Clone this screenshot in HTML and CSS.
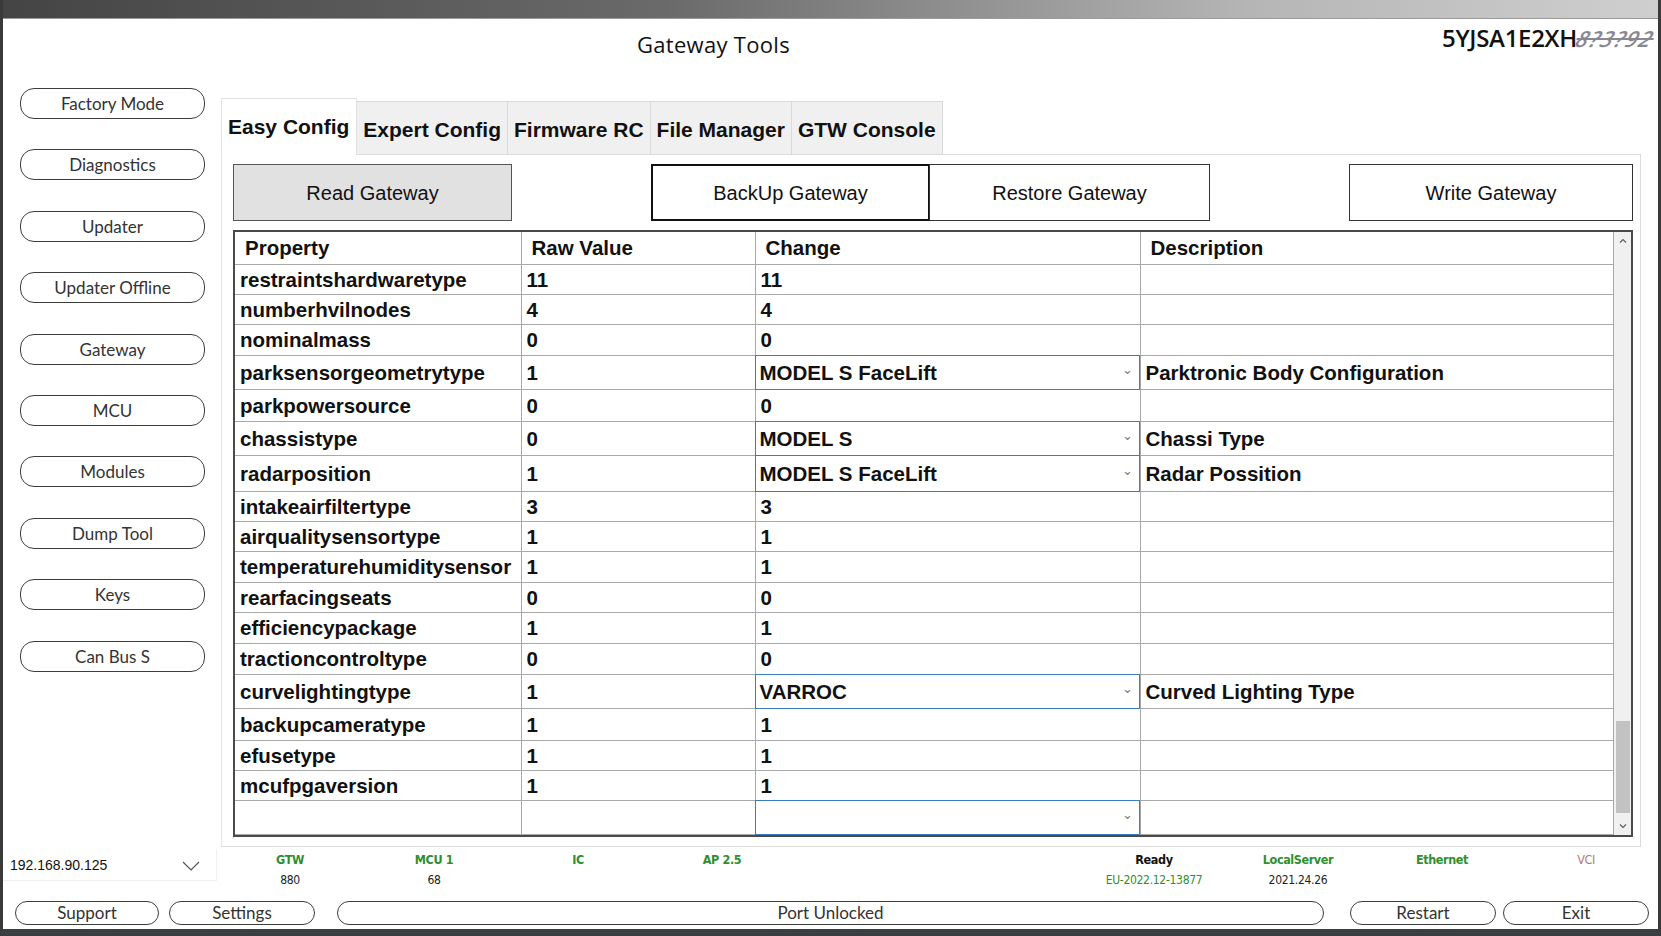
FILE: index.html
```
<!DOCTYPE html>
<html>
<head>
<title>Gateway Tools</title>
<meta charset="utf-8">
<link rel="stylesheet" href="styles.css">
</head>
<body>
<div class="window">
 <div class="titlebar"></div>

 <div class="head">
  <div class="title">Gateway Tools</div>
  <div class="vin">5YJSA1E2XH<span class="smudge">8?3?92</span></div>
 </div>

 <div class="main">
  <div class="sidebar">
   <div class="pill side">Factory Mode</div>
   <div class="pill side">Diagnostics</div>
   <div class="pill side">Updater</div>
   <div class="pill side">Updater Offline</div>
   <div class="pill side">Gateway</div>
   <div class="pill side">MCU</div>
   <div class="pill side">Modules</div>
   <div class="pill side">Dump Tool</div>
   <div class="pill side">Keys</div>
   <div class="pill side">Can Bus S</div>
  </div>

  <div class="tabs">
   <div class="tabstrip">
    <div class="tab active">Easy Config</div>
    <div class="tab">Expert Config</div>
    <div class="tab">Firmware RC</div>
    <div class="tab">File Manager</div>
    <div class="tab">GTW Console</div>
   </div>
   <div class="page">
    <div class="actions">
     <div class="btn read">Read Gateway</div>
     <div class="btn backup">BackUp Gateway</div>
     <div class="btn restore">Restore Gateway</div>
     <div class="btn write">Write Gateway</div>
    </div>

    <div class="grid">
     <table>
      <colgroup><col class="c1"><col class="c2"><col class="c3"><col class="c4"></colgroup>
      <tr class="hd"><th>Property</th><th>Raw Value</th><th>Change</th><th>Description</th></tr>
      <tr><td>restraintshardwaretype</td><td>11</td><td>11</td><td></td></tr>
      <tr><td>numberhvilnodes</td><td>4</td><td>4</td><td></td></tr>
      <tr class="wide"><td>nominalmass</td><td>0</td><td>0</td><td></td></tr>
      <tr class="tall"><td>parksensorgeometrytype</td><td>1</td><td class="combo"><div class="cb">MODEL S FaceLift<span class="chev">&#8964;</span></div></td><td>Parktronic Body Configuration</td></tr>
      <tr class="after"><td>parkpowersource</td><td>0</td><td>0</td><td></td></tr>
      <tr class="tall"><td>chassistype</td><td>0</td><td class="combo"><div class="cb">MODEL S<span class="chev">&#8964;</span></div></td><td>Chassi Type</td></tr>
      <tr class="tall taller"><td>radarposition</td><td>1</td><td class="combo"><div class="cb">MODEL S FaceLift<span class="chev">&#8964;</span></div></td><td>Radar Possition</td></tr>
      <tr><td>intakeairfiltertype</td><td>3</td><td>3</td><td></td></tr>
      <tr><td>airqualitysensortype</td><td>1</td><td>1</td><td></td></tr>
      <tr class="wide"><td>temperaturehumiditysensor</td><td>1</td><td>1</td><td></td></tr>
      <tr><td>rearfacingseats</td><td>0</td><td>0</td><td></td></tr>
      <tr class="wide"><td>efficiencypackage</td><td>1</td><td>1</td><td></td></tr>
      <tr class="wide"><td>tractioncontroltype</td><td>0</td><td>0</td><td></td></tr>
      <tr class="tall"><td>curvelightingtype</td><td>1</td><td class="combo"><div class="cb">VARROC<span class="chev">&#8964;</span></div></td><td>Curved Lighting Type</td></tr>
      <tr class="after"><td>backupcameratype</td><td>1</td><td>1</td><td></td></tr>
      <tr><td>efusetype</td><td>1</td><td>1</td><td></td></tr>
      <tr><td>mcufpgaversion</td><td>1</td><td>1</td><td></td></tr>
      <tr class="tall"><td></td><td></td><td class="combo"><div class="cb"><span class="chev">&#8964;</span></div></td><td></td></tr>
     </table>
     <div class="scroll">
      <svg class="arrow" width="18" height="18" viewBox="0 0 18 18"><path d="M6 10.5 L9 7.5 L12 10.5" fill="none" stroke="#606060" stroke-width="1.2"/></svg>
      <div class="track"><div class="thumb"></div></div>
      <svg class="arrow" width="18" height="18" viewBox="0 0 18 18"><path d="M6 7.5 L9 10.5 L12 7.5" fill="none" stroke="#606060" stroke-width="1.2"/></svg>
     </div>
    </div>
   </div>
  </div>
 </div>

 <div class="status">
  <div class="ip">192.168.90.125<svg class="ipchev" width="20" height="12" viewBox="0 0 20 12"><path d="M2 2 L10 10 L18 2" fill="none" stroke="#555" stroke-width="1.2"/></svg></div>
  <div class="cells">
   <div class="cell"><b class="ok">GTW</b><span>880</span></div>
   <div class="cell"><b class="ok">MCU 1</b><span>68</span></div>
   <div class="cell"><b class="ok">IC</b><span></span></div>
   <div class="cell"><b class="ok">AP 2.5</b><span></span></div>
   <div class="cell"></div>
   <div class="cell"></div>
   <div class="cell"><b>Ready</b><span class="okv">EU-2022.12-13877</span></div>
   <div class="cell"><b class="ok">LocalServer</b><span>2021.24.26</span></div>
   <div class="cell"><b class="ok">Ethernet</b><span></span></div>
   <div class="cell"><b class="off">VCI</b><span></span></div>
  </div>
 </div>

 <div class="footer">
  <div class="pill support">Support</div>
  <div class="pill settings">Settings</div>
  <div class="pill port">Port Unlocked</div>
  <div class="pill restart">Restart</div>
  <div class="pill exit">Exit</div>
 </div>
</div>
</body>
</html>
```
FILE: styles.css
```
html, body {
 margin:0;
 padding:0;
 background:#fff;
}
.window {
 width:1661px;
 height:936px;
 box-sizing:border-box;
 border-left:3px solid #3a3a3a;
 border-right:3px solid #3a3a3a;
 border-bottom:7px solid #3a3f44;
 background:#fff;
 display:flex;
 flex-direction:column;
 font-family:"Liberation Sans", Arial, sans-serif;
 color:#111;
 overflow:hidden;
}
.titlebar {
 height:18px;
 margin:0 -3px;
 background:linear-gradient(to right,#444,#6a6a6a 40%,#b5b5b5 75%,#cfcfcf);
 border-bottom:1px solid #9a9a9a;
}

/* header */
.head {
 height:49px;
 display:flex;
 align-items:center;
}
.title {
 margin-left:634px;
 font-family:"Open Sans", "Noto Sans", sans-serif;
 font-size:22px;
 color:#111;
 letter-spacing:0.3px;
}
.vin {
 margin-left:auto;
 margin-right:4px;
 margin-top:-12px;
 font-family:"Open Sans", "Noto Sans", sans-serif;
 font-weight:600;
 font-size:24px;
 letter-spacing:-0.3px;
 color:#111;
}
.smudge {
 display:inline-block;
 font-style:italic;
 font-size:22px;
 color:#4a4a5a;
 letter-spacing:1.5px;
 text-decoration:line-through;
 transform:skewX(-20deg);
 opacity:0.65;
}

/* main */
.main {
 height:779px;
 display:flex;
}
.sidebar {
 width:185px;
 margin-left:17px;
 padding-top:20px;
 display:flex;
 flex-direction:column;
 gap:30.4px;
}
.pill {
 box-sizing:border-box;
 border:1px solid #3c3c3c;
 border-radius:14px;
 text-align:center;
 font-family:Lato, "Open Sans", sans-serif;
 font-size:17px;
 color:#333;
 background:#fff;
}
.side {
 height:31px;
 line-height:29px;
}

/* tab control */
.tabs {
 width:1422px;
 margin-left:14px;
 margin-top:31px;
 display:flex;
 flex-direction:column;
}
.tabstrip {
 display:flex;
 align-items:flex-end;
 height:55px;
 padding-left:3px;
}
.tab {
 box-sizing:border-box;
 height:53px;
 line-height:55px;
 padding:0 6px;
 font-size:21px;
 font-weight:bold;
 background:#f0f0f0;
 border:1px solid #dadada;
 border-bottom:none;
 margin-left:-1px;
}
.tab.active {
 height:57px;
 line-height:55px;
 background:#fff;
 border-color:#e2e2e2;
 margin-bottom:-1px;
 position:relative;
 padding:0 7px 0 6px;
}
.page {
 flex:1;
 box-sizing:border-box;
 border:1px solid #dcdcdc;
 border-left:1px solid #e4e4e4;
 margin-left:2px;
 padding:9px 7px 9px 11px;
 display:flex;
 flex-direction:column;
 gap:9px;
}
.actions {
 display:flex;
 height:57px;
}
.btn {
 box-sizing:border-box;
 height:57px;
 line-height:57px;
 border:1px solid #333;
 text-align:center;
 font-size:20px;
 color:#111;
 background:#fff;
}
.btn.read {
 width:279px;
 background:#e1e1e1;
 border-color:#555;
}
.btn.backup {
 width:279px;
 margin-left:139px;
 border:2px solid #111;
 line-height:55px;
}
.btn.restore {
 width:281px;
 margin-left:-1px;
}
.btn.write {
 width:284px;
 margin-left:auto;
}

/* data grid */
.grid {
 flex:1;
 display:flex;
 box-sizing:border-box;
 border:2px solid #4a4a4a;
 overflow:hidden;
}
.grid table {
 border-collapse:collapse;
 table-layout:fixed;
 width:1378px;
 align-self:flex-start;
}
.c1 { width:286px; }
.c2 { width:234px; }
.c3 { width:385px; }
.c4 { width:473px; }
.grid th, .grid td {
 border:1px solid #a9a9a9;
 padding:0 5px;
 height:29px;
 font-size:20.5px;
 font-weight:bold;
 text-align:left;
 white-space:nowrap;
 overflow:hidden;
 color:#111;
}
.grid th {
 height:32px;
 padding-left:10px;
 border-top:none;
}
.grid tr td:first-child, .grid tr th:first-child { border-left:none; }
.grid tr.wide td { height:30px; }
.grid tr.tall td { height:33px; }
.grid tr.taller td { height:35px; }
.grid tr.after td { height:31px; }
.grid td.combo {
 padding:0;
 overflow:visible;
}
.cb {
 box-sizing:border-box;
 height:35px;
 line-height:33px;
 margin:-1px 0 -1px -1px;
 border:1px solid #3a7cc2;
 background:#fff;
 padding-left:4px;
 position:relative;
 z-index:1;
}
.taller .cb {
 height:37px;
 line-height:35px;
}
.chev {
 position:absolute;
 right:6px;
 top:-3px;
 font-size:13px;
 font-weight:normal;
 color:#777;
}
.scroll {
 width:18px;
 margin-left:auto;
 background:#f0f0f0;
 display:flex;
 flex-direction:column;
}
.arrow {
 display:block;
 flex:none;
}
.track {
 flex:1;
 display:flex;
 flex-direction:column;
 justify-content:flex-end;
 padding-bottom:4px;
}
.thumb {
 height:92px;
 margin:0 2px;
 background:#c2c2c2;
}

/* status line */
.status {
 height:48px;
 display:flex;
 margin-top:2px;
}
.ip {
 box-sizing:border-box;
 width:214px;
 height:32px;
 line-height:32px;
 padding-left:7px;
 font-size:14px;
 color:#111;
 border-right:1px solid #f0f0f0;
 border-bottom:1px solid #f0f0f0;
 position:relative;
}
.ipchev {
 position:absolute;
 right:15px;
 top:11px;
}
.cells {
 display:grid;
 grid-template-columns:repeat(10, 144px);
 margin-left:1px;
}
.cell {
 display:flex;
 flex-direction:column;
 align-items:center;
 font-family:"DejaVu Sans Condensed", "DejaVu Sans", sans-serif;
 font-stretch:condensed;
 font-size:12.5px;
 line-height:21px;
 color:#222;
}
.cell b { color:#111; letter-spacing:-0.4px; }
.cell b.ok { color:#2f8f2f; }
.cell b.off { color:#b07a7a; font-weight:normal; }
.cell span { font-size:12px; letter-spacing:-0.3px; }
.cell span.okv { color:#2f8f2f; }

/* footer */
.footer {
 display:flex;
 align-items:center;
 height:31px;
 padding-left:12px;
}
.footer .pill {
 height:24px;
 line-height:22px;
 border-radius:13px;
 font-size:17px;
}
.support { width:144px; }
.settings { width:146px; margin-left:10px; }
.port { width:987px; margin-left:22px; }
.restart { width:146px; margin-left:26px; }
.exit { width:146px; margin-left:7px; }
```
